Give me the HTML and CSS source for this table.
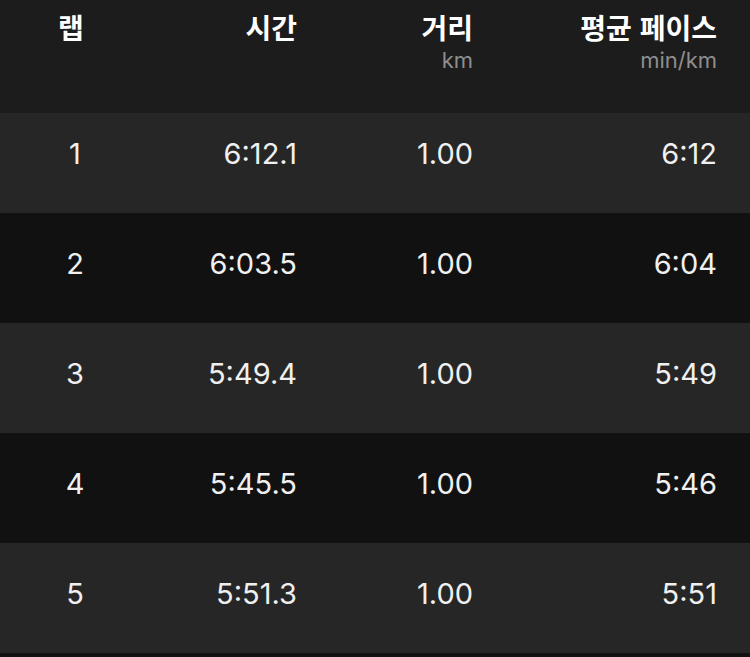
FILE: index.html
```html
<!DOCTYPE html>
<html lang="ko">
<head>
<meta charset="utf-8">
<title>랩</title>
<link rel="stylesheet" href="styles.css">
</head>
<body>
<div class="table">
  <div class="head">
    <div class="hcell lap"><div class="title">랩</div></div>
    <div class="hcell"><div class="title">시간</div></div>
    <div class="hcell"><div class="title">거리</div><div class="unit">km</div></div>
    <div class="hcell"><div class="title">평균 페이스</div><div class="unit">min/km</div></div>
  </div>
  <div class="row odd first">
    <div class="cell lap">1</div><div class="cell">6:12.1</div><div class="cell">1.00</div><div class="cell">6:12</div>
  </div>
  <div class="row even">
    <div class="cell lap">2</div><div class="cell">6:03.5</div><div class="cell">1.00</div><div class="cell">6:04</div>
  </div>
  <div class="row odd">
    <div class="cell lap">3</div><div class="cell">5:49.4</div><div class="cell">1.00</div><div class="cell">5:49</div>
  </div>
  <div class="row even">
    <div class="cell lap">4</div><div class="cell">5:45.5</div><div class="cell">1.00</div><div class="cell">5:46</div>
  </div>
  <div class="row odd">
    <div class="cell lap">5</div><div class="cell">5:51.3</div><div class="cell">1.00</div><div class="cell">5:51</div>
  </div>
</div>
</body>
</html>
```
FILE: styles.css
```css
html, body {
  margin: 0;
  padding: 0;
  background: #111111;
}
body {
  width: 750px;
  height: 657px;
  overflow: hidden;
  font-family: Inter, "Noto Sans CJK KR", sans-serif;
  color: #f0f0f0;
}
.table {
  display: flex;
  flex-direction: column;
}
.head,
.row {
  display: grid;
  grid-template-columns: 150px 147px 176px 244px;
  padding-right: 33px;
}
.head {
  height: 113px;
  box-sizing: border-box;
  padding-top: 12px;
  background: #1c1c1c;
}
.hcell {
  text-align: right;
}
.hcell.lap {
  text-align: center;
  padding-right: 8px;
}
.title {
  font-family: "Noto Sans CJK KR", sans-serif;
  font-weight: 700;
  font-size: 28px;
  line-height: 31px;
  color: #ffffff;
}
.unit {
  font-size: 22px;
  line-height: 24px;
  margin-top: 5px;
  color: #8e8e8e;
}
.row {
  height: 110px;
  box-sizing: border-box;
  padding-top: 36px;
  font-size: 29px;
  line-height: 29px;
}
.row.first {
  height: 100px;
  padding-top: 26px;
}
.odd {
  background: #262626;
}
.even {
  background: #111111;
}
.cell {
  text-align: right;
}
.cell.lap {
  text-align: center;
}
```
